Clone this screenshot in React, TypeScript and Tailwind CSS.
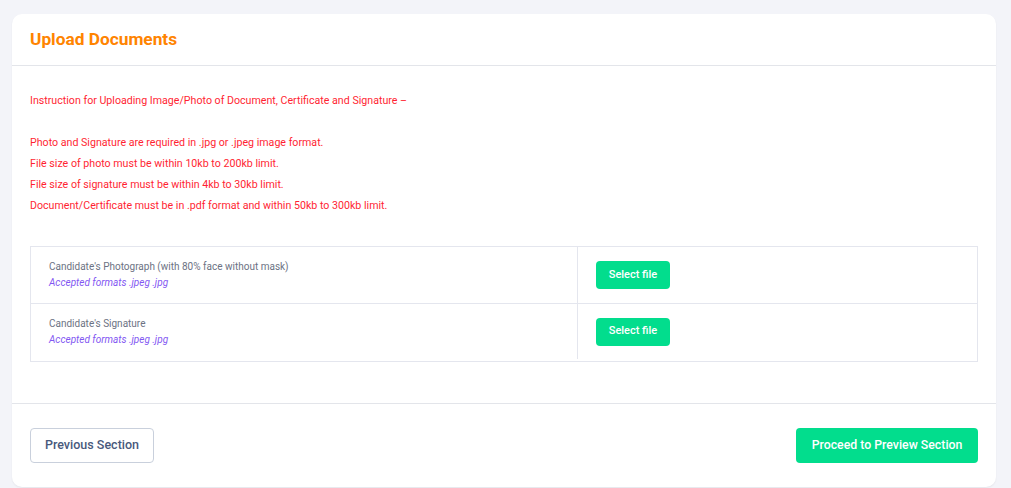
import React from 'react';

const rows = [
  { label: "Candidate's Photograph (with 80% face without mask)" },
  { label: "Candidate's Signature" },
];

const App: React.FC = () => {
  return (
    <div className="min-h-screen bg-[#f3f4f9] pt-[14px] pl-[12px] pr-[15px] font-['Roboto',sans-serif]">
      <div className="bg-white rounded-[10px] shadow-[0_1px_2px_rgba(0,0,0,0.06)]">
        {/* Header */}
        <div className="h-[52px] px-[18px] flex items-center border-b border-[#e3e5ea]">
          <h1 className="text-[17.3px] font-bold text-[#ff8400]">Upload Documents</h1>
        </div>

        {/* Body */}
        <div className="px-[18px] pt-[24px] pb-[41px]">
          <div className="text-[10.65px] leading-[21px] text-[#ff1f33]">
            <p>Instruction for Uploading Image/Photo of Document, Certificate and Signature –</p>
            <p>&nbsp;</p>
            <p>Photo and Signature are required in .jpg or .jpeg image format.</p>
            <p>File size of photo must be within 10kb to 200kb limit.</p>
            <p>File size of signature must be within 4kb to 30kb limit.</p>
            <p>Document/Certificate must be in .pdf format and within 50kb to 300kb limit.</p>
          </div>

          <div className="mt-[30px] border border-[#e4e6ee]">
            {rows.map((row, i) => (
              <div key={i} className={`grid grid-cols-[547px_1fr] ${i > 0 ? 'h-[58px] border-t border-[#e4e6ee] pb-[2px]' : 'h-[56px]'}`}>
                <div className="pl-[18px] flex flex-col justify-center border-r border-[#e4e6ee]">
                  <div className="text-[10px] leading-[16px] text-[#6c7283]">{row.label}</div>
                  <div className="text-[10px] leading-[16px] italic text-[#8257f2]">Accepted formats .jpeg .jpg</div>
                </div>
                <div className="pl-[18px] flex items-center">
                  <button className="h-[28px] w-[74px] rounded-[4px] bg-[#02dd8d] text-white text-[11px] font-medium">
                    Select file
                  </button>
                </div>
              </div>
            ))}
          </div>
        </div>

        {/* Footer */}
        <div className="border-t border-[#e3e5ea] px-[18px] pt-[24px] pb-[24px] flex justify-between">
          <button className="h-[35px] w-[124px] rounded-[4px] border border-[#c9d0dc] text-[12.5px] font-medium text-[#48597c]">
            Previous Section
          </button>
          <button className="h-[35px] w-[182px] rounded-[4px] bg-[#02dd8d] text-white text-[12.3px] font-medium">
            Proceed to Preview Section
          </button>
        </div>
      </div>
    </div>
  );
};

export default App;
